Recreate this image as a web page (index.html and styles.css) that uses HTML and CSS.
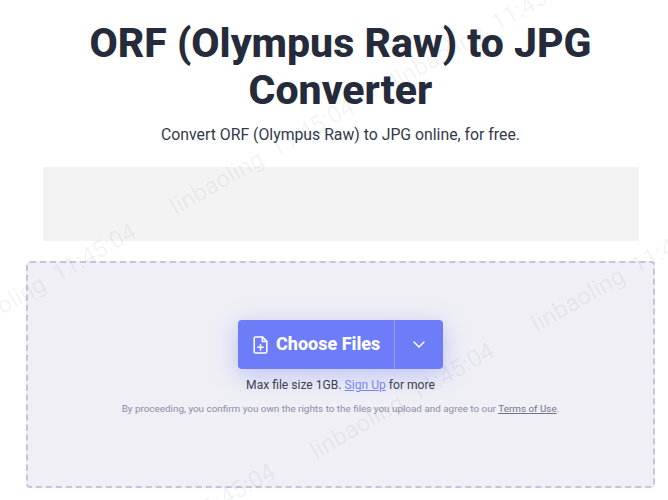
FILE: index.html
```html
<!DOCTYPE html>
<html lang="en">
<head>
    <meta charset="UTF-8">
    <meta name="viewport" content="width=device-width, initial-scale=1.0">
    <title>ORF (Olympus Raw) to JPG Converter</title>
    <link rel="stylesheet" href="styles.css">
</head>
<body>
    <main class="page">
        <h1 class="title">ORF (Olympus Raw) to JPG Converter</h1>
        <p class="subtitle">Convert ORF (Olympus Raw) to JPG online, for free.</p>
        <div class="ad-slot"></div>
        <section class="dropzone">
            <div class="upload-button">
                <button class="choose">
                    <svg class="file-icon" viewBox="0 0 16 20" fill="none" stroke="#fff" stroke-width="1.7" stroke-linejoin="round" stroke-linecap="round">
                        <path d="M2.5 1h7.5l5 5v11.5a1.5 1.5 0 0 1-1.5 1.5h-11a1.5 1.5 0 0 1-1.5-1.5v-15a1.5 1.5 0 0 1 1.5-1.5z"/>
                        <path d="M10 1v5h5"/>
                        <path d="M8 9.5v6M5 12.5h6"/>
                    </svg>
                    <span class="choose-label">Choose Files</span>
                </button>
                <button class="more">
                    <svg class="chevron" viewBox="0 0 12 7" fill="none" stroke="#fff" stroke-width="1.5" stroke-linecap="round" stroke-linejoin="round">
                        <path d="M1 1l5 5 5-5"/>
                    </svg>
                </button>
            </div>
            <p class="limit">Max file size 1GB. <a href="#">Sign Up</a> for more</p>
            <p class="terms">By proceeding, you confirm you own the rights to the files you upload and agree to our <a href="#">Terms of Use</a>.</p>
        </section>
    </main>

    <div class="watermarks">
        <div class="watermark wm-1">linbaoling&nbsp;&nbsp;11:45:04</div>
        <div class="watermark wm-2">linbaoling&nbsp;&nbsp;11:45:04</div>
        <div class="watermark wm-3">linbaoling&nbsp;&nbsp;11:45:04</div>
        <div class="watermark wm-4">linbaoling&nbsp;&nbsp;11:45:04</div>
        <div class="watermark wm-5">linbaoling&nbsp;&nbsp;11:45:04</div>
        <div class="watermark wm-6">linbaoling&nbsp;&nbsp;11:45:04</div>
    </div>
</body>
</html>
```

FILE: styles.css
```css
html, body {
    margin: 0;
    height: 500px;
    overflow: hidden;
    background: #fff;
}

body {
    font-family: Roboto, "Liberation Sans", sans-serif;
    color: #252b3a;
}

.page {
    width: 629px;
    margin-left: 26px;
    padding-top: 20px;
    text-align: center;
}

.title {
    margin: 0 auto;
    width: 560px;
    font-size: 41px;
    line-height: 47px;
    font-weight: 800;
    color: #252b3a;
}

.subtitle {
    margin: 9px 0 0;
    font-size: 15.8px;
    line-height: 24px;
    color: #33394a;
}

.ad-slot {
    width: 596px;
    height: 74px;
    margin: 20px 0 20px 17px;
    background: #f3f3f4;
}

.dropzone {
    box-sizing: border-box;
    height: 227px;
    padding-top: 57px;
    background: #efeff5;
    border: 2px dashed #c6c3dc;
    border-radius: 4px;
}

.upload-button {
    display: inline-flex;
    height: 49px;
    border-radius: 4px;
    background: #6d7cf7;
    box-shadow: 0 6px 24px rgba(109, 124, 247, 0.4);
}

.upload-button button {
    display: flex;
    align-items: center;
    border: none;
    background: none;
    color: #fff;
    padding: 0;
    font-family: inherit;
}

.choose {
    gap: 8px;
    width: 157px;
    padding-left: 15px !important;
    font-size: 18px;
    font-weight: 800;
    border-right: 1px solid #929df9 !important;
}

.choose-label {
    padding-bottom: 2px;
}

.more {
    justify-content: center;
    width: 48px;
}

.file-icon {
    width: 15px;
    height: 18px;
}

.chevron {
    width: 12px;
    height: 7px;
}

.limit {
    margin: 8px 0 0;
    font-size: 12.1px;
    line-height: 16px;
    color: #3c4152;
}

.limit a {
    color: #7785ee;
}

.terms {
    margin: 9px 0 0;
    font-size: 9.9px;
    line-height: 14px;
    color: #8a8ea6;
}

.terms a {
    color: #70748c;
}

.watermarks {
    position: absolute;
    top: 0;
    left: 0;
    width: 668px;
    height: 500px;
    overflow: hidden;
    pointer-events: none;
}

.watermark {
    position: absolute;
    font-size: 24px;
    line-height: 1;
    white-space: nowrap;
    color: rgba(40, 40, 60, 0.06);
    transform: rotate(-30deg);
    transform-origin: left bottom;
}

.wm-1 { left: 178px; top: 195px; }
.wm-2 { left: 399px; top: 69px; }
.wm-3 { left: -40px; top: 320px; }
.wm-4 { left: 539px; top: 312px; }
.wm-5 { left: 318px; top: 439px; }
.wm-6 { left: 99px; top: 560px; }
```
